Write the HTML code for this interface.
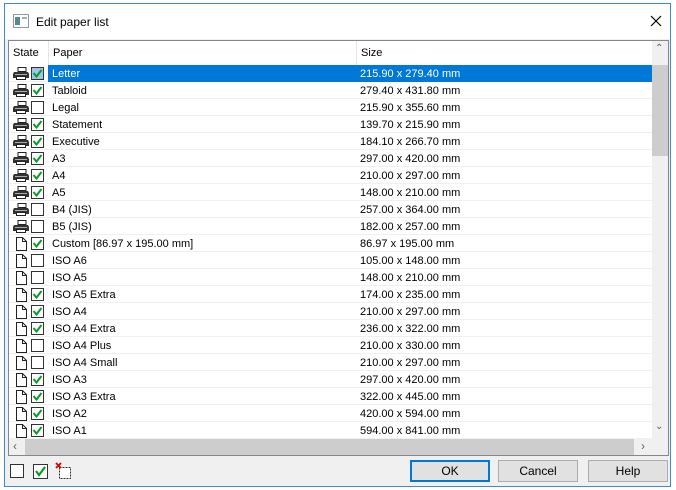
<!DOCTYPE html><html><head><style>
body{margin:0;width:676px;height:490px;background:#fff;font-family:"Liberation Sans",sans-serif;font-size:11px;position:relative;overflow:hidden}
.win{position:absolute;left:4px;top:3px;width:667px;height:484px;border:1px solid #3c8ad8;background:#f0f0f0;box-sizing:border-box}
.title{position:absolute;left:0;top:0;width:665px;height:35px;background:#fff}
.title span{position:absolute;left:31px;top:11px;font-size:12px;color:#000}
.list{position:absolute;left:8px;top:40px;width:661px;height:416px;background:#fff;border:1px solid #828790;box-sizing:border-box}
.hdr{position:absolute;top:0;height:24px;line-height:24px;color:#000;border-right:1px solid #e5e5e5;padding-left:4px;box-sizing:border-box}
.row{position:absolute;left:0;width:643px;height:17px;line-height:17px;border-bottom:1px solid #f0f0f0;box-sizing:border-box}
.row .p{position:absolute;left:43px;top:1px}
.row .s{position:absolute;left:351px;top:1px}
.sel .bg{position:absolute;left:39px;width:604px;top:0;height:17px;background:#0078d7}
.sel .p,.sel .s{color:#fff}
.ic{position:absolute;left:3px;top:1px}
.cb{position:absolute;left:22px;top:2px;width:11px;height:11px;border:1px solid #333;background:#fff}
.btn{position:absolute;top:460px;width:80px;height:22px;border:1px solid #adadad;background:#e1e1e1;text-align:center;line-height:20px;font-size:12px;box-sizing:border-box}
</style></head><body>
<div class="win">
<div class="title">
<svg style="position:absolute;left:8px;top:10px" width="16" height="14"><rect x="0.5" y="0.5" width="15" height="13" fill="#fff" stroke="#8a9aa8"/><rect x="2" y="3" width="5" height="8" fill="#5a8a8a"/><rect x="9" y="3" width="5" height="2" fill="#aaa"/></svg>
<span>Edit paper list</span>
<svg style="position:absolute;left:645px;top:11px" width="12" height="12"><path d="M1 1L11 11M11 1L1 11" stroke="#000" stroke-width="1.2"/></svg>
</div>
</div>
<div class="list" id="l">
<div class="hdr" style="left:0;width:40px">State</div>
<div class="hdr" style="left:40px;width:308px">Paper</div>
<div class="hdr" style="left:348px;width:295px;border-right:none">Size</div>
<div style="position:absolute;left:643px;top:0;width:16px;height:398px;background:#f0f0f0"></div>
<div style="position:absolute;left:643px;top:24px;width:16px;height:91px;background:#cdcdcd"></div>
<div style="position:absolute;left:646px;top:2px;font-size:10px;color:#606060">&#8963;</div>
<div style="position:absolute;left:646px;top:380px;font-size:10px;color:#606060">&#8964;</div>
<div style="position:absolute;left:0;top:398px;width:659px;height:16px;background:#f0f0f0"></div>
<div style="position:absolute;left:16px;top:398px;width:609px;height:16px;background:#cdcdcd"></div>
<div style="position:absolute;left:4px;top:398px;font-size:12px;color:#606060">&lsaquo;</div>
<div style="position:absolute;left:632px;top:398px;font-size:12px;color:#606060">&rsaquo;</div>
</div>
<div style="position:absolute;left:10px;top:464px;width:14px;height:14px;border:1px solid #333;box-sizing:border-box;background:#fff"></div>
<svg style="position:absolute;left:33px;top:464px" width="15" height="15"><rect x="0.5" y="0.5" width="14" height="14" fill="#fff" stroke="#333"/><path d="M3 7L6 11L12 3" stroke="#0a9a2a" stroke-width="2.2" fill="none"/></svg>
<svg style="position:absolute;left:55px;top:462px" width="18" height="18"><rect x="4.5" y="5.5" width="11" height="11" fill="#fff" stroke="#333" stroke-dasharray="2 1"/><path d="M1 1L6 6M6 1L1 6" stroke="#d00" stroke-width="1.8"/></svg>
<div class="btn" style="left:410px;border:2px solid #0078d7;line-height:18px">OK</div>
<div class="btn" style="left:498px">Cancel</div>
<div class="btn" style="left:588px">Help</div>
<script>
var d=[["Letter","215.90 x 279.40 mm",1,1],["Tabloid","279.40 x 431.80 mm",1,1],["Legal","215.90 x 355.60 mm",1,0],["Statement","139.70 x 215.90 mm",1,1],["Executive","184.10 x 266.70 mm",1,1],["A3","297.00 x 420.00 mm",1,1],["A4","210.00 x 297.00 mm",1,1],["A5","148.00 x 210.00 mm",1,1],["B4 (JIS)","257.00 x 364.00 mm",1,0],["B5 (JIS)","182.00 x 257.00 mm",1,0],["Custom [86.97 x 195.00 mm]","86.97 x 195.00 mm",0,1],["ISO A6","105.00 x 148.00 mm",0,0],["ISO A5","148.00 x 210.00 mm",0,0],["ISO A5 Extra","174.00 x 235.00 mm",0,1],["ISO A4","210.00 x 297.00 mm",0,1],["ISO A4 Extra","236.00 x 322.00 mm",0,1],["ISO A4 Plus","210.00 x 330.00 mm",0,0],["ISO A4 Small","210.00 x 297.00 mm",0,0],["ISO A3","297.00 x 420.00 mm",0,1],["ISO A3 Extra","322.00 x 445.00 mm",0,1],["ISO A2","420.00 x 594.00 mm",0,1],["ISO A1","594.00 x 841.00 mm",0,1]];
var pr='<svg class="ic" width="18" height="15"><rect x="6" y="1.5" width="8" height="4" fill="#fff" stroke="#222"/><path d="M2 6H16L17 8V12H1V8Z" fill="#333"/><rect x="3" y="8" width="12" height="1" fill="#aaa"/><rect x="4.5" y="10.5" width="9" height="3" fill="#fff" stroke="#222"/></svg>';
var pg='<svg class="ic" width="18" height="16"><path d="M4.5 1.5H10.5L14.5 5.5V14.5H4.5Z M10.5 1.5V5.5H14.5" fill="#fff" stroke="#222"/></svg>';
var h='';
d.forEach(function(r,i){var ck=r[3]?'<svg style="position:absolute;left:22px;top:2px" width="13" height="13"><rect x="0.5" y="0.5" width="12" height="12" fill="'+(i==0?'#9cc7ea':'#fff')+'" stroke="#333"/><path d="M2.5 6L5.5 9.5L10.5 3" stroke="#0a9a2a" stroke-width="2" fill="none"/></svg>':'<div class="cb"></div>';
h+='<div class="row'+(i==0?' sel':'')+'" style="top:'+(24+i*17)+'px">'+(i==0?'<div class="bg"></div>':'')+(r[2]?pr:pg)+ck+'<span class="p">'+r[0]+'</span><span class="s">'+r[1]+'</span></div>';});
document.getElementById('l').insertAdjacentHTML('beforeend',h);
</script>
</body></html>
